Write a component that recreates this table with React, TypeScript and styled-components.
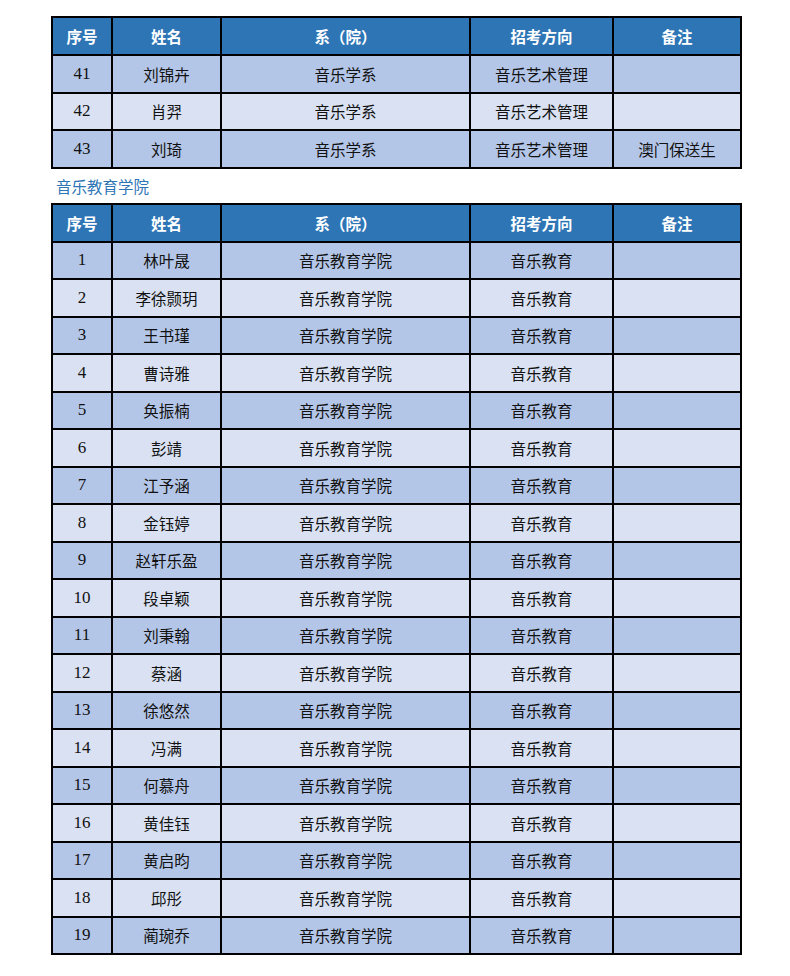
import * as React from 'react'
import styled, { createGlobalStyle } from 'styled-components'

const GlobalStyle = createGlobalStyle`
  body {
    margin: 0;
    background: #ffffff;
    font-family: "Liberation Serif", "Noto Sans CJK SC", serif;
  }
`

const Page = styled.div`
  width: 790px;
  padding: 16px 0 0 51px;
  box-sizing: border-box;
`

const Table = styled.table`
  width: 689px;
  border-collapse: collapse;
  table-layout: fixed;
  border: 2px solid #000;
`

const HeadCell = styled.th`
  height: 36px;
  padding: 0;
  background: #2e75b6;
  color: #ffffff;
  border: 2px solid #000;
  font-family: "Noto Sans CJK SC", sans-serif;
  font-weight: 700;
  font-size: 15.5px;
  text-align: center;
`

const Row = styled.tr<{ $dark: boolean }>`
  height: 37.5px;
  background: ${props => (props.$dark ? '#b4c6e7' : '#d9e1f2')};
`

const Cell = styled.td<{ $num?: boolean }>`
  padding: 0;
  border: 2px solid #000;
  color: #111;
  font-size: ${props => (props.$num ? '17px' : '15.5px')};
  text-align: center;
  vertical-align: middle;
`

const SectionTitle = styled.div`
  height: 34px;
  padding-left: 5px;
  display: flex;
  align-items: center;
  color: #2e75b6;
  font-size: 15.5px;
`

type Student = { no: number; name: string; dept: string; major: string; note?: string }

const headers = ['序号', '姓名', '系（院）', '招考方向', '备注']
const widths = [60, 109, 249, 143, 128]

const musicology: Student[] = [
  { no: 41, name: '刘锦卉', dept: '音乐学系', major: '音乐艺术管理' },
  { no: 42, name: '肖羿', dept: '音乐学系', major: '音乐艺术管理' },
  { no: 43, name: '刘琦', dept: '音乐学系', major: '音乐艺术管理', note: '澳门保送生' },
]

const eduNames = [
  '林叶晟', '李徐颢玥', '王书瑾', '曹诗雅', '奂振楠', '彭靖', '江予涵', '金钰婷', '赵轩乐盈', '段卓颖',
  '刘秉翰', '蔡涵', '徐悠然', '冯满', '何慕舟', '黄佳钰', '黄启昀', '邱彤', '蔺琬乔',
]

const education: Student[] = eduNames.map((name, i) => ({
  no: i + 1,
  name,
  dept: '音乐教育学院',
  major: '音乐教育',
}))

const RosterTable = ({ rows }: { rows: Student[] }) => (
  <Table>
    <colgroup>
      {widths.map((w, i) => (
        <col key={i} style={{ width: w }} />
      ))}
    </colgroup>
    <thead>
      <tr>
        {headers.map(h => (
          <HeadCell key={h}>{h}</HeadCell>
        ))}
      </tr>
    </thead>
    <tbody>
      {rows.map((r, i) => (
        <Row key={r.no} $dark={i % 2 === 0}>
          <Cell $num>{r.no}</Cell>
          <Cell>{r.name}</Cell>
          <Cell>{r.dept}</Cell>
          <Cell>{r.major}</Cell>
          <Cell>{r.note ?? ''}</Cell>
        </Row>
      ))}
    </tbody>
  </Table>
)

export default function App() {
  return (
    <Page>
      <GlobalStyle />
      <RosterTable rows={musicology} />
      <SectionTitle>音乐教育学院</SectionTitle>
      <RosterTable rows={education} />
    </Page>
  )
}
